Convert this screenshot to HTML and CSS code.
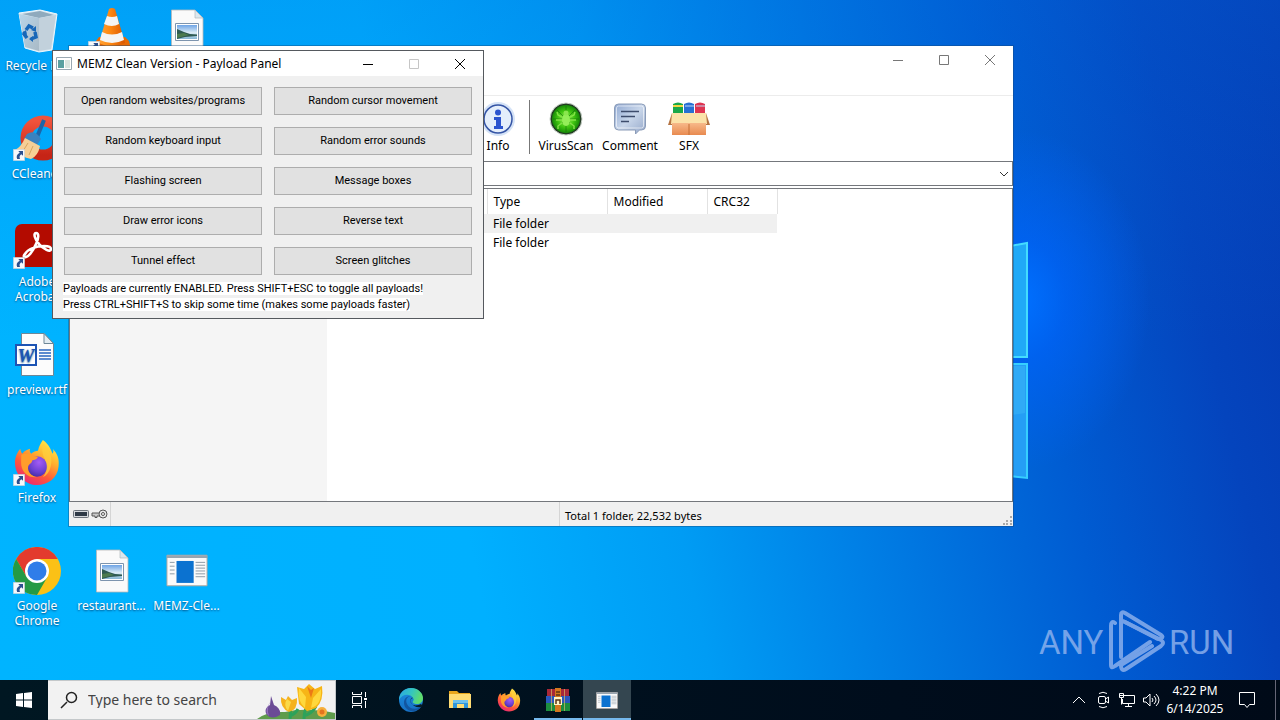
FILE: index.html
```html
<!DOCTYPE html>
<html lang="en">
<head>
<meta charset="utf-8">
<title>Desktop</title>
<link rel="stylesheet" href="styles.css">
</head>
<body>
<svg class="defs" width="0" height="0" aria-hidden="true">
  <defs>
    <linearGradient id="ffBody" x1=".8" y1="0" x2=".2" y2="1"><stop offset="0" stop-color="#fff04a"/><stop offset=".35" stop-color="#ffb02e"/><stop offset=".65" stop-color="#ff5a38"/><stop offset="1" stop-color="#e8207c"/></linearGradient>
    <radialGradient id="ffGlobe" cx=".6" cy=".3" r=".8"><stop offset="0" stop-color="#a45cf5"/><stop offset=".6" stop-color="#6a3fd0"/><stop offset="1" stop-color="#3d2a96"/></radialGradient>
    <linearGradient id="edgeTop" x1="0" y1="0" x2="1" y2=".3"><stop offset="0" stop-color="#2aa5e6"/><stop offset=".55" stop-color="#34c5c0"/><stop offset="1" stop-color="#5fdc6c"/></linearGradient>
    <linearGradient id="edgeLow" x1="0" y1="0" x2="0" y2="1"><stop offset="0" stop-color="#1b8fe0"/><stop offset="1" stop-color="#1670c4"/></linearGradient>
    <linearGradient id="cone" x1="0" y1="0" x2="1" y2="0"><stop offset="0" stop-color="#ffa338"/><stop offset=".4" stop-color="#ff8a12"/><stop offset="1" stop-color="#d85500"/></linearGradient>
    <linearGradient id="photo" x1="0" y1="0" x2="0" y2="1"><stop offset="0" stop-color="#6ea4e6"/><stop offset=".55" stop-color="#dcecf5"/><stop offset="1" stop-color="#86b6d4"/></linearGradient>
    <linearGradient id="binFront" x1="0" y1="0" x2="1" y2="1"><stop offset="0" stop-color="#b9d6ea"/><stop offset="1" stop-color="#a9bac6"/></linearGradient>
    <linearGradient id="ring" x1="0" y1="0" x2="0" y2="1"><stop offset="0" stop-color="#f0533c"/><stop offset="1" stop-color="#c62416"/></linearGradient>
    <radialGradient id="green" cx=".5" cy=".5" r=".5"><stop offset="0" stop-color="#9cf25a"/><stop offset=".6" stop-color="#3fc410"/><stop offset="1" stop-color="#178a08"/></radialGradient>
    <linearGradient id="bubble" x1="0" y1="0" x2="1" y2="1"><stop offset="0" stop-color="#8fa8d2"/><stop offset=".5" stop-color="#c8d6ea"/><stop offset="1" stop-color="#93a6c8"/></linearGradient>
    <linearGradient id="carton" x1="0" y1="0" x2="0" y2="1"><stop offset="0" stop-color="#f7b98a"/><stop offset="1" stop-color="#e88a50"/></linearGradient>
    <symbol id="badge" viewBox="0 0 12 12"><path fill="#f6f8fa" stroke="#b9c4cf" stroke-width=".6" d="M.3.3h11.4v11.4H.3z"/><path fill="#2b4f8e" d="M5.300 2H10v4.800L8.300 5.300C6.500 6.300 6.200 8 7 10H4.200C3 7.400 3.800 5 6.800 3.700z"/></symbol>
    <symbol id="picture" viewBox="0 0 48 48">
      <path fill="#fafafa" stroke="#b8b8b8" stroke-width=".8" d="M8.500 3h23.500l8 8v34h-31.500z"/><path fill="#dbe7ee" stroke="#b0b7bb" stroke-width=".7" d="M32 3v8h8z"/>
      <path fill="#fff" stroke="#7d94ae" d="M12.500 16.500h23v17h-23z"/><path fill="url(#photo)" d="M14 18h20v14H14z"/><path fill="#2f5a52" d="M14 22l7 3 6 2 7 .5v1.500l-12 1-8 2z"/><path fill="#4c7a4e" d="M14 27l7-1 5 2-12 3z"/>
    </symbol>
    <symbol id="firefox" viewBox="0 0 48 48">
      <path fill="url(#ffBody)" d="M30 1c7 5 8 10 10 14 1-2 1-3 0-5 5 5 7 11 6 18C45 40 35 47 24 47S2 38 1.500 25C1.300 19 4 13 7 10c0 2 1 4 2 5 2-3 5-4 8-5-1 2 0 4 1 5 2-2 5-3 7-3 1-5 3-8 5-11z"/>
      <circle cx="24" cy="28" r="10.500" fill="url(#ffGlobe)"/>
      <path fill="#ff9d2b" d="M8 16c5-2 8-1 11 1l6 1c-1 3-4 3-6 4 0 3-3 3-4 6-1 5 3 10 9 11-9 1-15-5-16-12-.5-4 0-8 0-11z"/>
      <path fill="#ffcf3d" opacity=".75" d="M31 5c7 8 9 15 7 23-1 5-4 9-8 11 4-5 5-10 3-16-1-4-5-7-3-18z"/>
    </symbol>
    <symbol id="appwin" viewBox="0 0 44 34"><path fill="#fafafa" stroke="#b3a79c" d="M1 1h42v32H1z"/><path fill="#98a5b0" d="M1 1h42v3H1z"/><path fill="#0b72d0" d="M11 7h18v23H11z"/><path stroke="#8b98a5" d="M4 8.500h5M4 12.500h5M4 16.500h5M4 20.500h5M31 8.500h10M31 11.500h10M31 14.500h10M31 17.500h10M31 20.500h10M31 23.500h10"/></symbol>
  </defs>
</svg>

<main class="desktop">
  <svg class="wall-logo" width="18" height="240" viewBox="0 0 18 240" aria-hidden="true">
    <path fill="#20a9f7" stroke="#43dcff" stroke-width="2" d="M-2 5l17-3v114H-2z"/>
    <path fill="#259ef5" stroke="#36cfff" stroke-width="2" d="M-2 123h17v114l-17-2z"/>
    <path fill="#38b2f6" opacity=".6" d="M0 125h13v47l-13 2z"/>
  </svg>

  <div class="icons">
    <button class="shortcut r1 c1"><svg width="48" height="48" viewBox="0 0 48 48"><path fill="#d6e6f0" stroke="#eff7fb" d="M6 6l21-3 17 4-5 36-13 2-14-4z"/><path fill="#8faabd" d="M9 7l18-3 14 4-15 3z"/><path fill="url(#binFront)" d="M6 7l20 4v33l-14-4z"/><path fill="#c2d1dc" d="M26 11l17-3-5 34-12 2z"/><path fill="none" stroke="#1767b8" stroke-width="3.500" d="M13 23l3-4 4 2M22 25l1 5-5 2M14 31l-3-4 1-2"/><path fill="#1767b8" d="M18 23l5-4v6zM20 29v6l-4-3zM9 26l4-3 1 5z"/></svg><span>Recycle Bin</span></button>
    <button class="shortcut r1 c2" aria-label="VLC media player"><svg width="48" height="48" viewBox="0 0 48 48"><path fill="#e86a05" d="M8 34l3-4h26l4 4 3 12H4z"/><path fill="url(#cone)" d="M21 2q3-2 6 0l10 34q-13 7-26 0z"/><path fill="#f4f4f4" d="M19 9q5 2 10 0l2 8q-7 4-15 0zM14 25q10 5 20 0l2 8q-12 6-24 0z"/><use href="#badge" x="0" y="34" width="12" height="12"/></svg></button>
    <button class="shortcut r1 c3" aria-label="Picture"><svg width="48" height="48"><use href="#picture"/></svg></button>
    <button class="shortcut r2 c1"><svg width="48" height="48" viewBox="0 0 48 48"><circle cx="30" cy="23" r="17" fill="none" stroke="url(#ring)" stroke-width="11"/><path stroke="#1d65a8" stroke-width="4" d="M31 5L24 22"/><path fill="#3a82bf" d="M14 19q8-5 14 5l-4 6-13-6z"/><path fill="#f6cf96" d="M12 23l15 8q-2 10-9 13-10-2-16-9 6-3 10-12z"/><path fill="none" stroke="#d8a45f" d="M15 28l-5 8M20 31l-4 9"/><use href="#badge" x="0" y="34" width="12" height="12"/></svg><span>CCleaner</span></button>
    <button class="shortcut r3 c1"><svg width="48" height="48" viewBox="0 0 48 48"><rect x="2" y="1" width="44" height="43" rx="7" fill="#b30b00"/><path fill="none" stroke="#fff" stroke-width="2.600" d="M12 31c3-5 11-8 19-8 5 0 7 1 7 3 0 4-8 0-12-5-4-4-6-11-3-11s3 5 0 11c-3 7-8 14-11 13-2 0-1-2 0-3z"/><use href="#badge" x="0" y="34" width="12" height="12"/></svg><span>Adobe<br>Acrobat</span></button>
    <button class="shortcut r4 c1"><svg width="48" height="48" viewBox="0 0 48 48"><path fill="#fcfcfc" stroke="#6e8797" d="M8.500 2.500h22.500l9.500 10v32h-32z"/><path fill="#e2ecf2" stroke="#6e8797" d="M31 2.500v10h9.500z"/><path stroke="#2965c0" stroke-width="1.500" d="M26 19h12M26 22h12M26 25h12M26 28h12"/><path fill="#1d54b4" d="M2 13h22v22H2z"/><path fill="#fff" d="M4 15h18v18H4z"/><text x="13" y="31" text-anchor="middle" class="word-mark">W</text></svg><span>preview.rtf</span></button>
    <button class="shortcut r5 c1"><svg width="48" height="48" viewBox="0 0 48 48"><use href="#firefox" width="48" height="47"/><use href="#badge" x="0" y="35" width="12" height="12"/></svg><span>Firefox</span></button>
    <button class="shortcut r6 c1"><svg width="48" height="48" viewBox="0 0 48 48"><circle cx="24" cy="24" r="24" fill="#fbc116"/><path fill="#e33b2e" d="M3.200 12A24 24 0 0 1 44.800 12H24L13.600 30z"/><path fill="#249a45" d="M3.200 12A24 24 0 0 0 24 48L34.400 30 13.600 30z"/><circle cx="24" cy="24" r="12" fill="#fff"/><circle cx="24" cy="24" r="9.500" fill="#2f7de9"/><use href="#badge" x="0" y="35" width="12" height="12"/></svg><span>Google<br>Chrome</span></button>
    <button class="shortcut r6 c2"><svg width="48" height="48"><use href="#picture"/></svg><span>restaurant...</span></button>
    <button class="shortcut r6 c3"><svg width="48" height="48" viewBox="0 0 48 48"><use href="#appwin" x="3" y="7" width="42" height="33"/></svg><span>MEMZ-Cle...</span></button>
  </div>

  <svg class="anyrun" width="206" height="70" viewBox="0 0 206 70" role="img" aria-label="ANY RUN">
    <text x="5" y="49">ANY</text><text x="135" y="49">RUN</text>
    <g fill="none" stroke="#91b4ee" stroke-width="4" stroke-linejoin="round" stroke-linecap="round"><path d="M81 18q-4-3-4 3v39q0 4 4 1l35-24M87 52V10q0-4 4-2l36 22q3 2 0 3-2 2-5 0L89 16"/><path d="M87 60q0 7 5 4l35-23q4-3 0-6L91 17M87 60l31-19"/></g>
  </svg>

  <section class="window archive" aria-label="Archive">
    <header class="archive-title">
      <button aria-label="Minimize"><svg width="12" height="12"><path d="M1 6.500h10"/></svg></button>
      <button aria-label="Maximize"><svg width="12" height="12"><path d="M1.500 1.500h9v9h-9z"/></svg></button>
      <button aria-label="Close"><svg width="12" height="12"><path d="M1 1l10 10M11 1L1 11"/></svg></button>
    </header>
    <div class="toolbar">
      <button class="tool"><svg width="40" height="38" viewBox="0 0 40 38"><circle cx="20" cy="19" r="17" fill="#d5e3f7"/><circle cx="20" cy="19" r="14" fill="#e4eefb" stroke="#3454a5" stroke-width="1.500"/><circle cx="20" cy="12.500" r="3" fill="#2b54cf"/><path fill="#2b54cf" d="M16 17h7v9h2v3h-9v-3h2v-6h-2z"/></svg>Info</button>
      <span class="divider"></span>
      <button class="tool"><svg width="40" height="38" viewBox="0 0 40 38"><circle cx="20" cy="19" r="16" fill="#223b22" stroke="#c8d0c8"/><circle cx="20" cy="19" r="14" fill="url(#green)"/><path fill="none" stroke="#146b0c" opacity=".6" d="M20 6v26M7 19h26M11 10l18 18M29 10L11 28"/><ellipse cx="20" cy="20" rx="4" ry="6" fill="#94ee58"/><circle cx="20" cy="13" r="2.500" fill="#8ae64e"/><path fill="none" stroke="#83e347" stroke-width="1.500" d="M16 17l-4-2-1-3M24 17l4-2 1-3M16 20h-6M24 20h6M16 23l-4 3v3M24 23l4 3v3"/></svg>VirusScan</button>
      <button class="tool"><svg width="40" height="38" viewBox="0 0 40 38"><path fill="url(#bubble)" stroke="#8b9cb8" d="M8.500 4h23q4 0 4 4v18q0 4-4 4h-2l-4 4v-4h-17q-4 0-4-4V8q0-4 4-4z"/><path fill="none" stroke="#fff" opacity=".6" d="M8.500 6h23q2 0 2 2v18q0 2-2 2h-23q-2 0-2-2V8q0-2 2-2z"/><path stroke="#3d4c6c" stroke-width="1.500" d="M11 11.500h18M11 16.500h14M11 21.500h8"/></svg>Comment</button>
      <button class="tool"><svg width="42" height="38" viewBox="0 0 42 38"><path fill="#19a849" d="M5 4q5-3 10 0v13H5z"/><path fill="#2870d4" d="M16 4q5-3 10 0v13H16z"/><path fill="#df3451" d="M27 4q5-3 10 0v13H27z"/><path stroke="#f4d644" stroke-width="2" d="M5 6h10"/><path stroke="#bcd7f5" d="M17 6h9M28 6h9"/><path fill="#b47443" d="M4 13L0 25h4zM38 13l4 12h-4z"/><path fill="#fbe2a9" d="M4 13h34l1 11H3z"/><path fill="url(#carton)" d="M4 23h34v12H4z"/><path stroke="#c56e35" d="M21 24v11"/></svg>SFX</button>
    </div>
    <div class="address"><input type="text" aria-label="Path"><button aria-label="Show path list"><svg width="10" height="8"><path d="M1 2l4 4 4-4"/></svg></button></div>
    <div class="browser">
      <nav class="tree" aria-label="Folders"></nav>
      <div class="list">
        <table>
          <colgroup><col class="w-name"><col class="w-type"><col class="w-date"><col class="w-crc"></colgroup>
          <thead><tr><th></th><th>Type</th><th>Modified</th><th>CRC32</th></tr></thead>
          <tbody><tr class="selected"><td></td><td>File folder</td><td></td><td></td></tr><tr><td></td><td>File folder</td><td></td><td></td></tr></tbody>
        </table>
      </div>
    </div>
    <footer class="status">
      <div class="status-icons"><svg width="16" height="10" viewBox="0 0 16 10"><rect x=".5" y="1.500" width="15" height="7" rx="1" fill="#d5d8dc" stroke="#6d747c"/><path fill="#2e3946" d="M2 3h12v4H2z"/></svg><svg width="17" height="10" viewBox="0 0 17 10"><path fill="#c8c8c8" stroke="#555" d="M1 4h8v3H6v1.500H4V7H1z"/><circle cx="12" cy="5" r="4" fill="#e8e8e8" stroke="#555"/><circle cx="12" cy="5" r="1.500" fill="#fff" stroke="#555"/></svg></div>
      <div class="status-sel"></div>
      <div class="status-total">Total 1 folder, 22,532 bytes</div>
      <svg class="grip" width="9" height="9"><path fill="#a9a9a9" d="M7 0h2v2H7zM3 4h2v2H3zM7 4h2v2H7zM0 7h2v2H0zM3 7h2v2H3zM7 7h2v2H7z"/></svg>
    </footer>
  </section>

  <section class="window memz" aria-label="Payload Panel">
    <header class="memz-title">
      <svg width="16" height="13" viewBox="0 0 16 13"><path fill="#fff" stroke="#9aa8b2" d="M.5.5h15v12H.5z"/><path fill="#5aa0a0" d="M2 3h6v8H2z"/><path fill="#dbe5df" d="M9 3h5v8H9z"/></svg>
      <h1>MEMZ Clean Version - Payload Panel</h1>
      <button aria-label="Minimize"><svg width="12" height="12"><path d="M1 6.500h10"/></svg></button>
      <button aria-label="Maximize" disabled><svg width="12" height="12"><path d="M1.500 1.500h9v9h-9z"/></svg></button>
      <button aria-label="Close"><svg width="12" height="12"><path d="M1 1l10 10M11 1L1 11"/></svg></button>
    </header>
    <div class="payloads">
      <button>Open random websites/programs</button><button>Random cursor movement</button>
      <button>Random keyboard input</button><button>Random error sounds</button>
      <button>Flashing screen</button><button>Message boxes</button>
      <button>Draw error icons</button><button>Reverse text</button>
      <button>Tunnel effect</button><button>Screen glitches</button>
    </div>
    <p class="note"><span>Payloads are currently ENABLED. Press SHIFT+ESC to toggle all payloads!</span><br><span>Press CTRL+SHIFT+S to skip some time (makes some payloads faster)</span></p>
  </section>
</main>

<footer class="taskbar">
  <button class="start" aria-label="Start"><svg width="16" height="16"><path fill="#fff" d="M0 2l7-1v6.500H0zM8 1l8-1v7.500H8zM0 8.500h7V15l-7-1zM8 8.500h8V16l-8-1z"/></svg></button>
  <label class="search">
    <svg width="18" height="18"><path fill="none" stroke="#222" stroke-width="1.500" d="M1 17l6-6M6.500 6.500a5 5 0 1 0 10 0 5 5 0 1 0-10 0z"/></svg>
    <input type="text" aria-label="Search" placeholder="Type here to search">
    <svg class="flowers" width="78" height="38" viewBox="0 0 78 38"><path fill="#5f9c4b" d="M0 38q10-8 28-7 20-5 50 1v6z"/><path fill="none" stroke="#2da25a" stroke-width="3" d="M33 38q1-9-1-14M47 38q0-10 5-15M46 35q9-2 13-10M33 35q6-3 8-7"/><path fill="#6b4b96" d="M14 15l3 9q7 3 6 10-8 5-13 0-4-6 3-10z"/><path fill="#9271bb" d="M14 20q-5 7-2 15-5-4 0-12z"/><path fill="#f5b21c" d="M24 16l5 3 2-4 4 4 5-2q1 12-8 14-9-4-8-15z"/><path fill="#fbd94a" d="M30 18l4 3-3 9q-5-6-1-12z"/><path fill="#f7b516" d="M40 6l7 2 5-5 6 5 7-3q2 15-6 22l-9 3-8-7z"/><path fill="#ffd83d" d="M42 7l7 9-1 11q-8-7-6-20zM64 8l-8 9-2 10q11-3 10-19z"/><path fill="#ec7a16" d="M50 5l4 4 3-2-3 10z"/><circle cx="65" cy="31" r="5" fill="#f6b03c"/><circle cx="65" cy="31" r="2.500" fill="#e3741f"/></svg>
  </label>
  <div class="apps">
    <button class="task-view" aria-label="Task view"><svg width="18" height="16"><path fill="none" stroke="#fff" d="M1.500 0v2.500h9V0M1.500 4.500h9v7h-9zM1.500 16v-2.500h9V16M14.500 0v5M14.500 9v7"/><path fill="#fff" d="M13 6h3v2h-3z"/></svg></button>
    <button aria-label="Edge"><svg width="24" height="24" viewBox="0 0 24 24"><circle cx="12" cy="12" r="12" fill="url(#edgeLow)"/><path fill="url(#edgeTop)" d="M0 12C0 5 5 0 12 0c7 0 12 5 12 10 0 4-3 6-6 6-3 0-5-1-4-3 1-1 1-2 0-3C11 5 3 6 0 12z"/><path fill="#1256a0" d="M12 9c-4-1-6 3-4 7 2 5 8 6 14 3-3 5-12 6-16 0C3 13 7 7 12 9z"/><path fill="#071b25" d="M14 10c-3 0-3 5 0 7 3 1 6 0 8-1l2 2-2 1c-4 1-8-1-10-4-1-3 0-6 2-5z"/></svg></button>
    <button aria-label="File Explorer"><svg width="24" height="20" viewBox="0 0 24 20"><path fill="#e9a71d" d="M1 1h8l2 2h11v15H1z"/><path fill="#ffdc73" d="M1 4h22v14H1z"/><path fill="#2f95d9" d="M5 10h15v8h-4v-4H9v4H5z"/><path fill="#6dc0ec" d="M5 10h15v3H5z"/></svg></button>
    <button aria-label="Firefox"><svg width="24" height="24"><use href="#firefox"/></svg></button>
    <button class="open" aria-label="WinRAR"><svg width="24" height="24" viewBox="0 0 24 24"><path fill="#a72838" d="M1 1h22v7H1z"/><path fill="#2957bd" d="M0 8h24v7H0z"/><path fill="#1c8d3e" d="M0 15h24v8H0z"/><path stroke="#d5b56b" opacity=".7" d="M5.500 1v22M18.500 1v22"/><path fill="#d4771f" d="M9 0h6v24H9z"/><path fill="#fff3c6" d="M8 9h8v8H8z"/><path fill="none" stroke="#5c3515" stroke-width="1.500" d="M10 16v-4h4v4M10 4h4M10 7h4"/></svg></button>
    <button class="open active" aria-label="MEMZ"><svg width="22" height="17" viewBox="0 0 44 34"><use href="#appwin"/></svg></button>
  </div>
  <div class="tray">
    <button aria-label="Hidden icons"><svg width="16" height="16"><path d="M2 11l6-6 6 6"/></svg></button>
    <button aria-label="Meet Now"><svg width="16" height="18"><path d="M4 2.500Q8 0 12 2.500M4 15.500q4 2.500 8 0M5 5.500h4q1.500 0 1.500 1.500v4q0 1.500-1.500 1.500H5q-1.500 0-1.500-1.500V7q0-1.500 1.500-1.500zM10.500 8l3-2v6l-3-2"/></svg></button>
    <button aria-label="Network"><svg width="18" height="16"><path d="M6 3.500h10.500v8H4.500V7M10.500 11.500v3M7 14.500h7M1.500 1.500h4v4h-4zM3.500 5.500v7M2 3.500h3"/></svg></button>
    <button aria-label="Volume"><svg width="18" height="16"><path d="M1.500 6v4H4l4 4V2L4 6zM10 6q2 2 0 4M12 4q4 4 0 8M14 2q6 6 0 12"/></svg></button>
    <button class="clock"><time>4:22 PM<br>6/14/2025</time></button>
    <button class="notify" aria-label="Notifications"><svg width="18" height="18"><path d="M1.500 1.500h15v12h-5l-2.500 3-2.500-3h-5z"/></svg></button>
    <button class="peek" aria-label="Show desktop"></button>
  </div>
</footer>
</body>
</html>
```

FILE: styles.css
```css
* { box-sizing: border-box; }
body { margin: 0; height: 100vh; display: flex; flex-direction: column; overflow: hidden; font: 12px/16px "Noto Sans", "Open Sans", sans-serif; color: #000; }
button { border: 0; padding: 0; background: none; font: inherit; color: inherit; }
input { border: 0; padding: 0; background: none; font: inherit; min-width: 0; }
.defs { position: absolute; }

.desktop {
  position: relative; flex: 1; overflow: hidden;
  background:
    radial-gradient(ellipse 130px 170px at 1020px 300px, #0070ff 0, rgba(0, 100, 250, .7) 35%, rgba(0, 85, 225, 0) 100%),
    linear-gradient(180deg, rgba(0, 110, 225, .25) 0, rgba(0, 110, 225, 0) 50%),
    linear-gradient(78deg, #00b4ff 0, #00b0ff 35%, #009cf4 50%, #0080e6 62%, #005cd2 78%, #0444bd 90%, #053ab2 100%);
}
.wall-logo { position: absolute; left: 1012px; top: 241px; }
.icons { display: grid; grid-template-columns: 74px 75px 75px; grid-template-rows: repeat(6, 108px); }
.shortcut { display: flex; flex-direction: column; align-items: center; gap: 3px; padding-top: 7px; color: #fff; font-size: 12px; line-height: 15px; white-space: nowrap; text-shadow: 0 1px 2px #004a80; }
.r1 { grid-row: 1; } .r2 { grid-row: 2; } .r3 { grid-row: 3; } .r4 { grid-row: 4; } .r5 { grid-row: 5; } .r6 { grid-row: 6; }
.c1 { grid-column: 1; } .c2 { grid-column: 2; } .c3 { grid-column: 3; }
.word-mark { font: italic bold 19px "Liberation Serif", serif; fill: #1d54b4; }
.anyrun { position: absolute; right: 40px; bottom: 5px; opacity: .8; }
.anyrun text { font: 400 33px Roboto, sans-serif; fill: #91b4ee; }

.window { position: absolute; display: flex; flex-direction: column; }
.window header button svg { fill: none; stroke: currentColor; }

.archive { left: 69px; top: 46px; width: 944px; height: 480px; background: #fff; box-shadow: 0 0 0 1px rgba(20, 70, 120, .4); }
.archive-title { height: 50px; display: flex; justify-content: flex-end; align-items: flex-start; border-bottom: 1px solid #ececec; color: #777; }
.archive-title button { width: 46px; height: 28px; display: grid; place-items: center; }
.toolbar { height: 65px; display: flex; align-items: flex-start; padding: 4px 0 0 403px; }
.tool { width: 64px; display: flex; flex-direction: column; align-items: center; }
.tool:first-child { width: 52px; }
.tool:last-child { width: 54px; }
.divider { width: 1px; height: 54px; margin: 0 4px 0 5px; background: #777; }
.address { height: 25px; display: flex; align-items: center; border: 1px solid #74777c; padding-right: 3px; }
.address input { flex: 1; }
.address svg { fill: none; stroke: #333; }
.browser { flex: 1; display: flex; min-height: 0; margin-top: 2px; border: 1px solid #74777c; }
.tree { width: 257px; background: #f5f5f5; }
.list { flex: 1; }
.list table { border-collapse: collapse; table-layout: fixed; width: 450px; }
.w-name { width: 160px; } .w-type { width: 120px; } .w-date { width: 100px; } .w-crc { width: 70px; }
.list th { height: 25px; padding: 0 6px; text-align: left; font-weight: 400; border-right: 1px solid #e2e2e2; }
.list td { height: 19px; padding: 0 6px; line-height: 18px; }
.selected { background: #f0f0f0; }
.status { height: 24px; display: flex; align-items: stretch; background: #f0f0f0; position: relative; font-size: 11px; line-height: 27px; }
.status-icons { width: 42px; display: flex; gap: 2px; padding: 7px 0 0 4px; border-right: 1px solid #d5d5d5; }
.status-sel { flex: 1; border-right: 1px solid #d5d5d5; }
.status-total { flex: 1; padding-left: 5px; }
.grip { position: absolute; right: 1px; bottom: 1px; }

.memz { left: 52px; top: 50px; width: 432px; background: #f0f0f0; border: 1px solid #55595e; }
.memz-title { height: 25px; display: flex; align-items: center; padding-left: 3px; background: #fff; }
.memz-title h1 { flex: 1; margin: 0 0 0 5px; font-size: 12px; font-weight: 400; }
.memz-title button { width: 46px; height: 25px; display: grid; place-items: center; }
.memz-title button:disabled { color: #c6c6c6; }
.payloads { display: grid; grid-template-columns: 1fr 1fr; gap: 12px; padding: 11px 11px 6px; }
.payloads button { height: 28px; border: 1px solid #adadad; background: #e1e1e1; }
.payloads button, .note { font-family: Roboto, "Liberation Sans", sans-serif; font-size: 11px; }
.note { margin: 0; padding: 0 10px 5px; line-height: 16px; }
.note span { background: #fff; }

.taskbar { height: 40px; display: flex; background: linear-gradient(90deg, #001722, #000d1c 70%, #000a18); color: #fff; }
.taskbar button { display: grid; place-items: center; }
.start { width: 48px; }
.search { width: 288px; display: flex; align-items: center; padding-left: 12px; background: #f2f2f2; border: 1px solid #c4c8ca; border-left: 0; }
.search input { flex: 1; margin-left: 10px; font-size: 14px; color: #333; }
.search input::placeholder { color: #444; opacity: 1; }
.flowers { align-self: flex-end; }
.apps { flex: 1; display: flex; gap: 1px; }
.apps button { width: 48px; border-bottom: 2px solid transparent; border-top: 2px solid transparent; }
.apps .task-view { margin-right: 2px; }
.apps .open { border-bottom-color: #76b9ed; }
.apps .active { background: #344650; border-top-color: #344650; }
.tray { display: flex; }
.tray button { width: 24px; }
.tray svg { fill: none; stroke: #fff; }
.tray .clock { width: 64px; line-height: 18px; text-align: center; }
.tray .notify { width: 40px; }
.tray .peek { width: 5px; border-left: 1px solid #667; margin-left: 8px; }
```
